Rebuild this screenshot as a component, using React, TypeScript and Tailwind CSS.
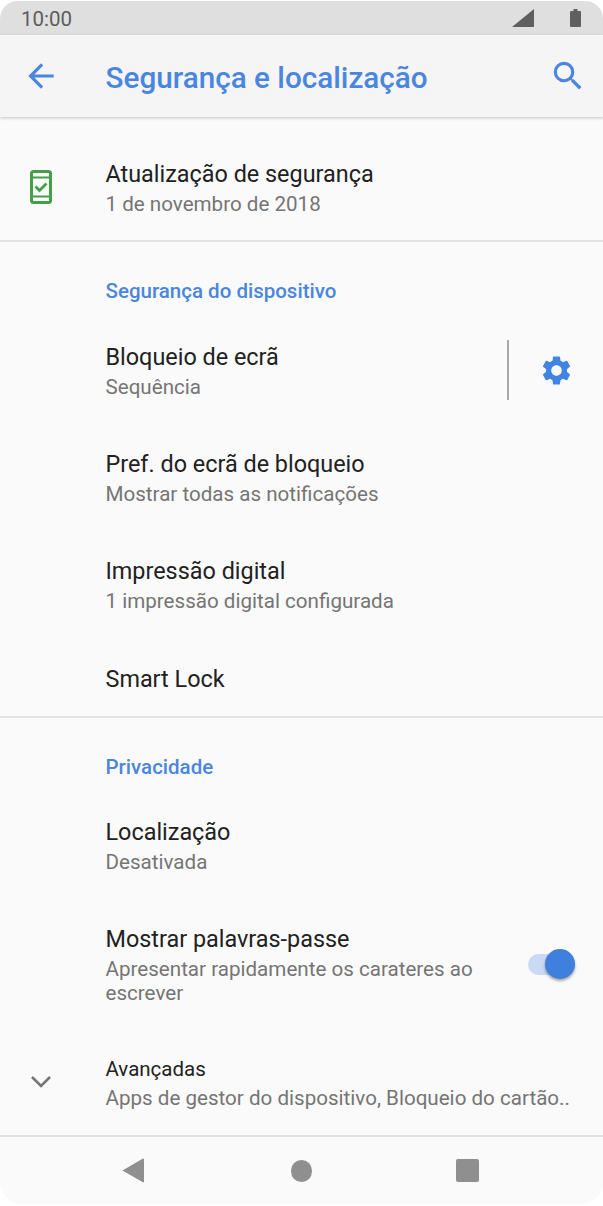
type RowProps = {
  title: string;
  sub?: string;
  className: string;
  titleClass?: string;
  icon?: React.ReactNode;
  right?: React.ReactNode;
};

function Row({ title, sub, className, titleClass = 'text-[23.4px]', icon, right }: RowProps) {
  return (
    <div className={`flex items-center ${className}`}>
      <div className="flex w-[105.5px] shrink-0 items-center justify-center pr-[23px]">{icon}</div>
      <div className="min-w-0 flex-1">
        <p className={`pt-[1px] leading-[30px] text-[#212121] ${titleClass}`}>{title}</p>
        {sub ? <p className="pt-[3px] text-[20.6px] leading-[24px] text-[#757575]">{sub}</p> : null}
      </div>
      {right}
    </div>
  );
}

function SectionHeader({ label, className }: { label: string; className: string }) {
  return <p className={`pl-[105.5px] text-[20.5px] leading-[24px] font-medium text-[#4a86e0] ${className}`}>{label}</p>;
}

function App() {
  return (
    <div className="h-[1206px] w-[603px] bg-white pt-[1px] pb-[2px] font-['Roboto',sans-serif]">
      <div className="flex h-full flex-col overflow-hidden rounded-t-[18px] rounded-b-[22px] bg-[#fafafa]">
        <div className="flex h-[34px] shrink-0 items-center justify-between bg-[#dfdfdf] pl-[21px] pr-[22px]">
          <span className="pt-[3px] text-[20.5px] text-[#5c5c5c]">10:00</span>
          <div className="flex items-center gap-[36px]">
            <svg width="22" height="18" viewBox="0 0 22 18">
              <path d="M22 0v18H0z" fill="#5f5f5f" />
            </svg>
            <svg width="11" height="18" viewBox="0 0 11 18">
              <path d="M3.5 0h4v2H10a1 1 0 0 1 1 1v14a1 1 0 0 1-1 1H1a1 1 0 0 1-1-1V3a1 1 0 0 1 1-1h2.5z" fill="#5f5f5f" />
            </svg>
          </div>
        </div>

        <div className="relative z-10 flex h-[82px] shrink-0 items-center bg-[#f5f5f5] shadow-[0_1px_3px_rgba(0,0,0,0.22)]">
          <div className="flex w-[105.5px] shrink-0 pl-[22px]">
            <svg width="38" height="38" viewBox="0 0 24 24">
              <path fill="#4a86e0" d="M20 11H7.83l5.59-5.59L12 4l-8 8 8 8 1.41-1.41L7.83 13H20v-2z" />
            </svg>
          </div>
          <h1 className="flex-1 pt-[4px] text-[29.7px] font-medium text-[#4a86e0]">Segurança e localização</h1>
          <svg width="38" height="38" viewBox="0 0 24 24" className="mr-[16px]">
            <path
              fill="#4a86e0"
              d="M15.5 14h-.79l-.28-.27A6.47 6.47 0 0 0 16 9.5 6.5 6.5 0 1 0 9.5 16c1.61 0 3.09-.59 4.23-1.57l.27.28v.79l5 4.99L20.49 19l-4.99-5zm-6 0C7.01 14 5 11.99 5 9.5S7.01 5 9.5 5 14 7.01 14 9.5 11.99 14 9.5 14z"
            />
          </svg>
        </div>

        <Row
          title="Atualização de segurança"
          sub="1 de novembro de 2018"
          className="h-[125px] shrink-0 border-b-2 border-[#e2e2e2] pt-[16px]"
          icon={
            <svg width="22" height="34" viewBox="0 0 22 34" fill="none">
              <rect x="1.5" y="1.5" width="19" height="31" rx="2" stroke="#43a047" strokeWidth="3" />
              <path d="M1 7.5h20M1 26.5h20" stroke="#43a047" strokeWidth="2" />
              <path d="M5.5 16.5l4 4 7-7" stroke="#43a047" strokeWidth="2.8" />
            </svg>
          }
        />

        <SectionHeader label="Segurança do dispositivo" className="mt-[37px]" />
        <Row
          title="Bloqueio de ecrã"
          sub="Sequência"
          className="mt-[23px] h-[88px]"
          right={
            <div className="flex h-[60px] items-center self-center">
              <div className="h-full w-[2px] bg-[#a8a8a8]" />
              <svg width="35" height="35" viewBox="0 0 24 24" className="ml-[30px] mr-[29px]">
                <path
                  fill="#4285e0"
                  d="M19.14 12.94c.04-.3.06-.61.06-.94 0-.32-.02-.64-.07-.94l2.03-1.58a.49.49 0 0 0 .12-.61l-1.92-3.32a.488.488 0 0 0-.59-.22l-2.39.96c-.5-.38-1.03-.7-1.62-.94l-.36-2.54a.484.484 0 0 0-.48-.41h-3.84c-.24 0-.43.17-.47.41l-.36 2.54c-.59.24-1.13.57-1.62.94l-2.39-.96c-.22-.08-.47 0-.59.22L2.74 8.87c-.12.21-.08.47.12.61l2.03 1.58c-.05.3-.09.63-.09.94s.02.64.07.94l-2.03 1.58a.49.49 0 0 0-.12.61l1.92 3.32c.12.22.37.29.59.22l2.39-.96c.5.38 1.03.7 1.62.94l.36 2.54c.05.24.24.41.48.41h3.84c.24 0 .44-.17.47-.41l.36-2.54c.59-.24 1.13-.56 1.62-.94l2.39.96c.22.08.47 0 .59-.22l1.92-3.32c.12-.22.07-.47-.12-.61l-2.01-1.58zM12 15.6c-1.98 0-3.6-1.62-3.6-3.6s1.62-3.6 3.6-3.6 3.6 1.62 3.6 3.6-1.62 3.6-3.6 3.6z"
                />
              </svg>
            </div>
          }
        />
        <Row title="Pref. do ecrã de bloqueio" sub="Mostrar todas as notificações" className="mt-[19px] h-[88px]" />
        <Row title="Impressão digital" sub="1 impressão digital configurada" className="mt-[19px] h-[88px]" />
        <Row title="Smart Lock" className="mt-[14px] h-[72px]" />
        <div className="mt-[2px] h-[2px] shrink-0 bg-[#e2e2e2]" />

        <SectionHeader label="Privacidade" className="mt-[37px]" />
        <Row title="Localização" sub="Desativada" className="mt-[22px] h-[88px]" />
        <Row
          title="Mostrar palavras-passe"
          sub="Apresentar rapidamente os carateres ao escrever"
          className="mt-[19px] h-[112px]"
          right={
            <div className="relative mt-[46px] mr-[28px] ml-[44px] h-[21px] w-[47px] self-start rounded-full bg-[#c9daf5]">
              <div className="absolute -top-[5px] right-0 h-[30px] w-[30px] rounded-full bg-[#3f7fdd] shadow-[0_2px_3px_rgba(0,0,0,0.35)]" />
            </div>
          }
        />
        <Row
          title="Avançadas"
          titleClass="-mt-[1px] -mb-[1px] text-[20.5px]"
          sub="Apps de gestor do dispositivo, Bloqueio do cartão.."
          className="mt-[18px] h-[88px]"
          icon={
            <svg width="34" height="34" viewBox="0 0 34 34" fill="none">
              <path d="M8 12l9 9 9-9" stroke="#757575" strokeWidth="2.6" />
            </svg>
          }
        />
        <div className="mt-[9px] h-[2px] shrink-0 bg-[#e2e2e2]" />

        <div className="relative flex flex-1 items-center">
          <svg width="22" height="25" viewBox="0 0 22 25" className="ml-[122px]">
            <path d="M21 0.5a1 1 0 0 1 1 1v22a1 1 0 0 1-1.6.6L0.5 12.5z" fill="#8f8f8f" />
          </svg>
          <div className="ml-[147px] h-[22px] w-[21px] rounded-full bg-[#8f8f8f]" />
          <div className="ml-[144px] h-[23px] w-[23px] rounded-[2px] bg-[#8f8f8f]" />
        </div>
      </div>
    </div>
  );
}

export default App;
